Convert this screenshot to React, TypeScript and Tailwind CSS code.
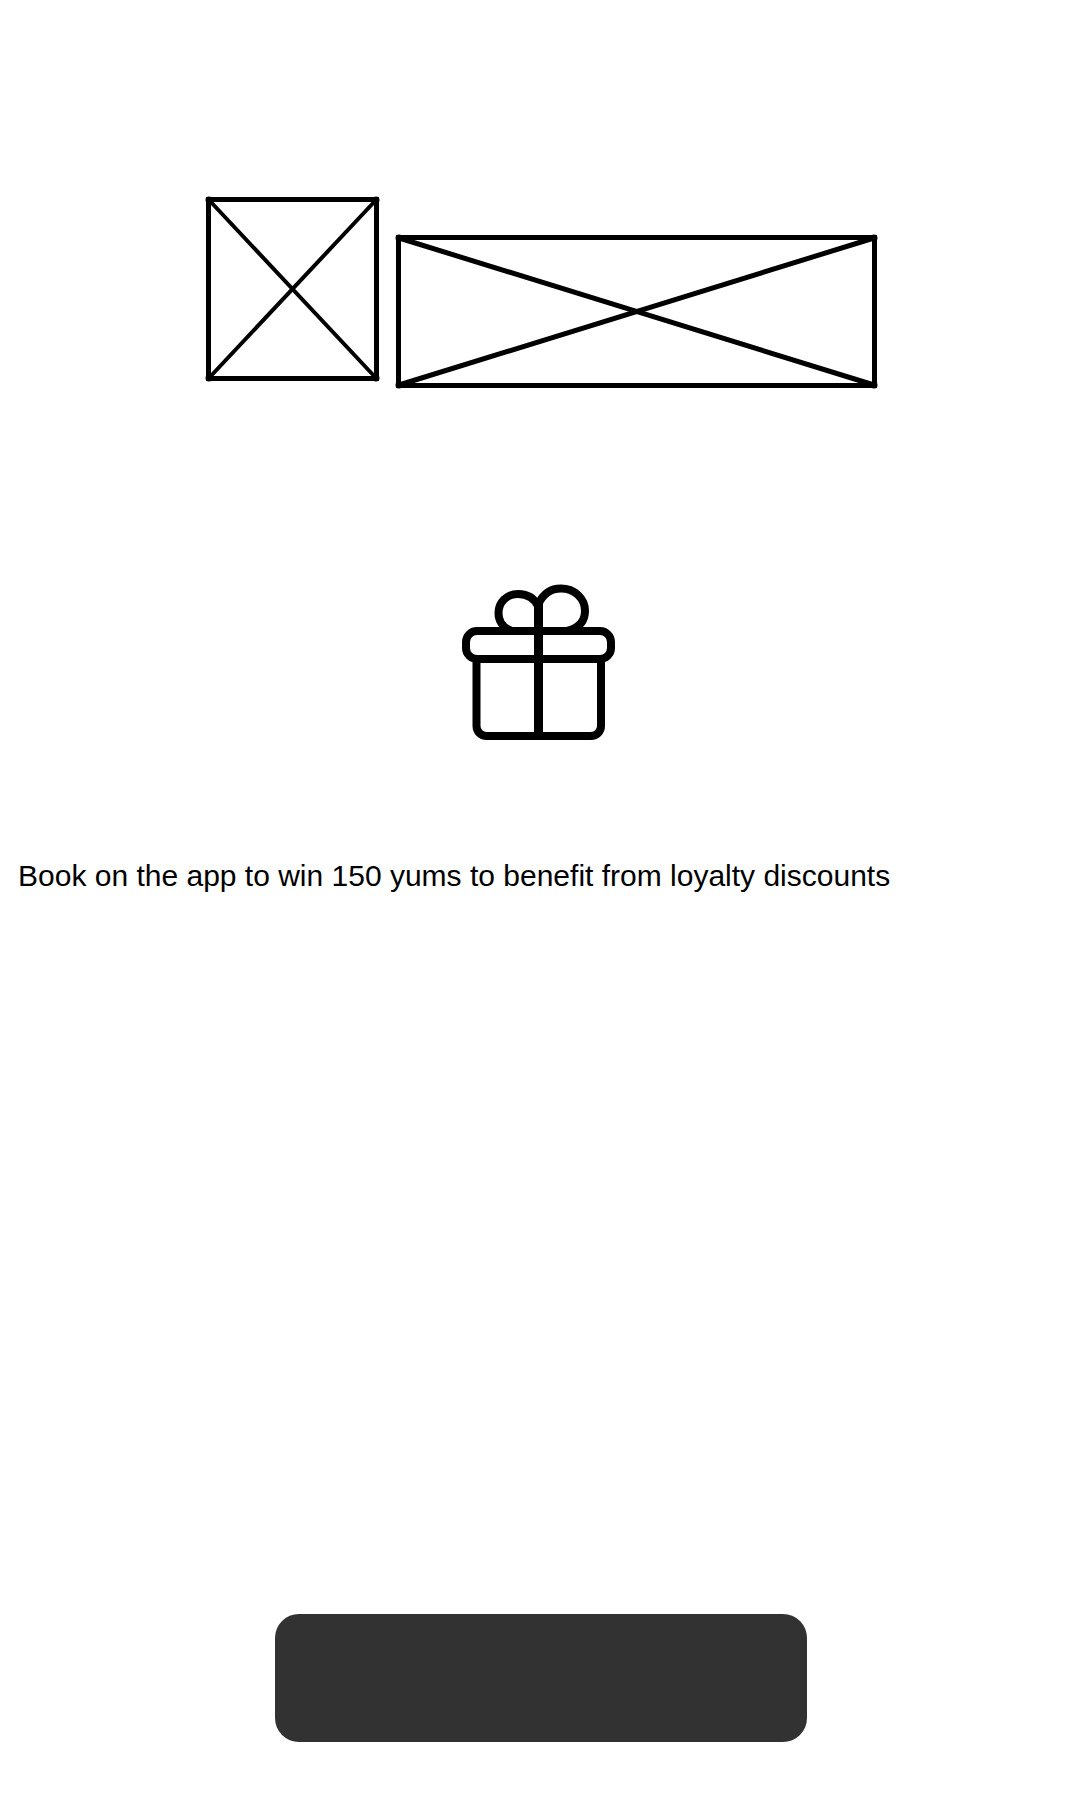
type PlaceholderProps = {
  width: number;
  height: number;
  cross: number;
  label: string;
  className?: string;
};

function Placeholder({ width, height, cross, label, className = "" }: PlaceholderProps) {
  const r = width - 3;
  const b = height - 3;
  return (
    <svg
      role="img"
      aria-label={label}
      width={width}
      height={height}
      viewBox={`0 0 ${width} ${height}`}
      fill="none"
      stroke="black"
      className={`overflow-visible ${className}`}
    >
      <rect x="2.5" y="2.5" width={width - 5} height={height - 5} strokeWidth="5" />
      <path d={`M3 3L${r} ${b}M${r} 3L3 ${b}`} strokeWidth={cross} />
      <path d={`M3 3h0M${r} 3h0M3 ${b}h0M${r} ${b}h0`} strokeWidth="7" strokeLinecap="round" />
    </svg>
  );
}

function GiftIcon() {
  return (
    <svg
      role="img"
      aria-label="Gift"
      width="154"
      height="156"
      viewBox="462 584 154 156"
      fill="none"
      stroke="black"
      strokeWidth="8"
    >
      <rect x="466" y="631" width="145" height="28" rx="11" />
      <path d="M476.500 659V726A10 10 0 0 0 486.500 736H591A10 10 0 0 0 601 726V659" />
      <path d="M538.500 602V736" strokeWidth="9" />
      <path d="M512 631C503 628 498.500 621 498.500 613C498.500 602 507 594 518 594C528 594 535 599 538.500 607" />
      <path d="M538.500 604C543 594 551 588.500 561 588.500C574 588.500 585 598 585 611C585 621 579 628 567 631" />
    </svg>
  );
}

export default function App() {
  return (
    <main className="flex min-h-screen flex-col bg-white pt-[197px] pb-[58px] font-['Liberation_Sans',Arial,sans-serif] text-black">
      <header className="flex items-end justify-center gap-[17px] pl-[3px]">
        <Placeholder width={173} height={184} cross={4} label="Logo" className="mb-[7px]" />
        <Placeholder width={481} height={153} cross={5} label="Brand name" />
      </header>
      <div className="mt-[196px] flex justify-center pr-[2px]">
        <GiftIcon />
      </div>
      <p className="mt-[116px] px-[18px] text-[30px] leading-10">
        Book on the app to win 150 yums to benefit from loyalty discounts
      </p>
      <div className="mt-auto flex justify-center pl-[2px]">
        <button
          type="button"
          aria-label="Continue"
          className="h-32 w-[532px] max-w-full rounded-3xl bg-[#323232]"
        />
      </div>
    </main>
  );
}
